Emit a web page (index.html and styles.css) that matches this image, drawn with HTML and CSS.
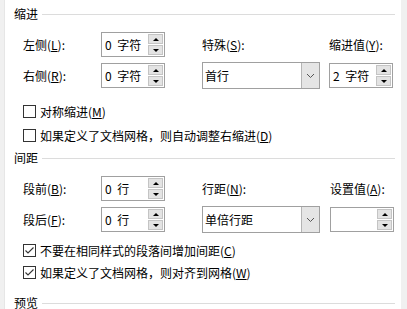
FILE: index.html
```html
<!DOCTYPE html>
<html>
<head>
<meta charset="utf-8">
<link rel="stylesheet" href="styles.css">
</head>
<body>
<div class="frame">
  <div class="side-left"></div>
  <div class="main">
    <div class="heading heading-first"><span>缩进</span><div class="rule"></div></div>
    <div class="grid">
      <div class="label">左侧(<u>L</u>):</div>
      <div class="cell"><div class="spin"><span class="val">0 字符</span><div class="btns"><div class="btn"><i class="up"></i></div><div class="btn"><i class="down"></i></div></div></div></div>
      <div class="label">特殊(<u>S</u>):</div>
      <div class="label">缩进值(<u>Y</u>):</div>
      <div class="label">右侧(<u>R</u>):</div>
      <div class="cell"><div class="spin"><span class="val">0 字符</span><div class="btns"><div class="btn"><i class="up"></i></div><div class="btn"><i class="down"></i></div></div></div></div>
      <div class="cell"><div class="combo"><span class="val">首行</span><div class="drop"><svg width="9" height="6" viewBox="0 0 9 6"><polyline points="1,1 4.5,4.5 8,1" fill="none" stroke="#555" stroke-width="1"/></svg></div></div></div>
      <div class="cell"><div class="spin"><span class="val">2 字符</span><div class="btns"><div class="btn"><i class="up"></i></div><div class="btn"><i class="down"></i></div></div></div></div>
    </div>
    <div class="check check-a"><span class="box"></span><span>对称缩进(<u>M</u>)</span></div>
    <div class="check check-a"><span class="box"></span><span>如果定义了文档网格，则自动调整右缩进(<u>D</u>)</span></div>

    <div class="heading heading-2"><span>间距</span><div class="rule"></div></div>
    <div class="grid">
      <div class="label">段前(<u>B</u>):</div>
      <div class="cell"><div class="spin"><span class="val">0 行</span><div class="btns"><div class="btn"><i class="up"></i></div><div class="btn"><i class="down"></i></div></div></div></div>
      <div class="label">行距(<u>N</u>):</div>
      <div class="label label-4">设置值(<u>A</u>):</div>
      <div class="label">段后(<u>F</u>):</div>
      <div class="cell"><div class="spin"><span class="val">0 行</span><div class="btns"><div class="btn"><i class="up"></i></div><div class="btn"><i class="down"></i></div></div></div></div>
      <div class="cell"><div class="combo"><span class="val">单倍行距</span><div class="drop"><svg width="9" height="6" viewBox="0 0 9 6"><polyline points="1,1 4.5,4.5 8,1" fill="none" stroke="#555" stroke-width="1"/></svg></div></div></div>
      <div class="cell cell-4"><div class="spin"><span class="val"></span><div class="btns"><div class="btn"><i class="up"></i></div><div class="btn"><i class="down"></i></div></div></div></div>
    </div>
    <div class="check check-b check-first"><span class="box"><svg width="11" height="11" viewBox="0 0 11 11"><polyline points="1.5,5.5 4,8 9.5,2.5" fill="none" stroke="#333" stroke-width="1.1"/></svg></span><span>不要在相同样式的段落间增加间距(<u>C</u>)</span></div>
    <div class="check check-b"><span class="box"><svg width="11" height="11" viewBox="0 0 11 11"><polyline points="1.5,5.5 4,8 9.5,2.5" fill="none" stroke="#333" stroke-width="1.1"/></svg></span><span>如果定义了文档网格，则对齐到网格(<u>W</u>)</span></div>

    <div class="heading heading-3"><span>预览</span><div class="rule"></div></div>
  </div>
  <div class="side-right"></div>
</div>
</body>
</html>
```

FILE: styles.css
```css
html, body {
  margin: 0;
  padding: 0;
  background: #ffffff;
}
body {
  font-family: "Noto Sans CJK SC", "Microsoft YaHei", sans-serif;
  font-size: 12px;
  color: #000;
  width: 407px;
  height: 309px;
  overflow: hidden;
}
.frame {
  display: flex;
  height: 309px;
}
.side-left {
  width: 5px;
  background: #f0f0f0;
  border-right: 1px solid #e6e6e6;
  box-sizing: border-box;
  flex: none;
}
.side-right {
  width: 6px;
  background: #f0f0f0;
  flex: none;
}
.main {
  flex: 1;
  padding: 6px 6px 0 9px;
  display: flex;
  flex-direction: column;
}
.heading {
  display: flex;
  align-items: center;
  height: 16px;
  line-height: 16px;
  flex: none;
}
.heading .rule {
  flex: 1;
  height: 1px;
  background: #dcdcdc;
  margin-left: 4px;
}
.heading-2 { margin-top: 3px; }
.heading-3 { margin-top: 12px; }
.grid {
  display: grid;
  grid-template-columns: 78px 101px 127px 65px;
  grid-template-rows: 25px 25px;
  row-gap: 6px;
  margin-top: 10px;
  margin-left: 9px;
  flex: none;
}
.label {
  display: flex;
  align-items: center;
  white-space: nowrap;
}
.label-4 { padding-left: 1px; }
.cell-4 { padding-left: 1px; }
u { text-decoration: underline; text-underline-offset: 1px; }
.spin {
  width: 64px;
  height: 25px;
  box-sizing: border-box;
  border: 1px solid #a0a0a0;
  background: #fff;
  display: flex;
  align-items: center;
}
.spin .val {
  flex: 1;
  padding-left: 3px;
  white-space: nowrap;
  word-spacing: 3px;
}
.btns {
  width: 15px;
  margin-right: 1px;
  height: 21px;
  display: flex;
  flex-direction: column;
  gap: 1px;
}
.btn {
  flex: 1;
  background: #e3e3e3;
  border: 1px solid #c4c4c4;
  box-sizing: border-box;
  display: flex;
  align-items: center;
  justify-content: center;
}
.btn i {
  width: 0;
  height: 0;
  border-left: 3px solid transparent;
  border-right: 3px solid transparent;
}
.btn i.up { border-bottom: 3px solid #000; }
.btn i.down { border-top: 3px solid #000; }
.combo {
  width: 118px;
  height: 27px;
  margin-top: -1px;
  box-sizing: border-box;
  border: 1px solid #a0a0a0;
  background: #fff;
  display: flex;
  align-items: stretch;
}
.combo .val {
  flex: 1;
  padding-left: 2px;
  display: flex;
  align-items: center;
  white-space: nowrap;
}
.drop {
  width: 17px;
  background: #e5e5e5;
  border-left: 1px solid #b4b4b4;
  display: flex;
  align-items: center;
  justify-content: center;
}
.check {
  display: flex;
  align-items: center;
  margin-left: 9px;
  white-space: nowrap;
  flex: none;
}
.check .box {
  width: 13px;
  height: 13px;
  box-sizing: border-box;
  border: 1px solid #333;
  background: #fff;
  margin-right: 4px;
  display: flex;
  align-items: center;
  justify-content: center;
  flex: none;
}
.check-a { height: 24px; }
.grid + .check-a { margin-top: 11px; }
.check-b { height: 22px; }
.check-first { margin-top: 7px; }
```
